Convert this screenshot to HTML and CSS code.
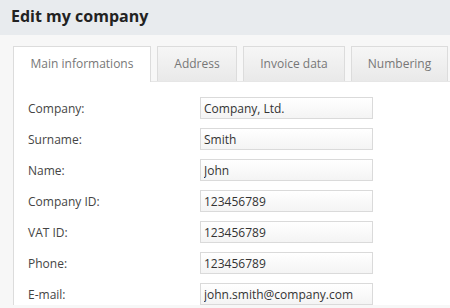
FILE: index.html
```html
<!DOCTYPE html>
<html>

<head>
    <title>Edit my company</title>
    <link rel="stylesheet" href="styles.css">
</head>

<body>
    <div class="pageHeader">
        <h1>Edit my company</h1>
    </div>
    <div class="pageBody">
        <div class="tabs">
            <div class="tab active">Main informations</div>
            <div class="tab">Address</div>
            <div class="tab">Invoice data</div>
            <div class="tab">Numbering</div>
        </div>
        <div class="tabPanel">
            <div class="formRow">
                <label>Company:</label>
                <input type="text" value="Company, Ltd." />
            </div>
            <div class="formRow">
                <label>Surname:</label>
                <input type="text" value="Smith" />
            </div>
            <div class="formRow">
                <label>Name:</label>
                <input type="text" value="John" />
            </div>
            <div class="formRow">
                <label>Company ID:</label>
                <input type="text" value="123456789" />
            </div>
            <div class="formRow">
                <label>VAT ID:</label>
                <input type="text" value="123456789" />
            </div>
            <div class="formRow">
                <label>Phone:</label>
                <input type="text" value="123456789" />
            </div>
            <div class="formRow">
                <label>E-mail:</label>
                <input type="text" value="john.smith@company.com" />
            </div>
        </div>
    </div>
</body>

</html>
```

FILE: styles.css
```css
body {
    margin: 0;
    font-family: "Open Sans", sans-serif;
    background-color: #f7f7f7;
    color: #444;
    overflow: hidden;
}
.pageHeader {
    height: 35px;
    background-color: #e8ebee;
    padding-left: 11px;
}
.pageHeader h1 {
    margin: 0;
    font-size: 16px;
    font-weight: bold;
    line-height: 33px;
    color: #222;
}
.pageBody {
    padding: 11px 0 0 13px;
}
.tabs {
    display: flex;
    gap: 6px;
}
.tab {
    height: 35px;
    line-height: 34px;
    font-size: 12px;
    color: #777;
    white-space: nowrap;
    background: linear-gradient(#f6f6f6, #e9e9e9);
    border: 1px solid #dcdcdc;
    border-bottom: none;
    text-align: center;
    box-sizing: border-box;
}
.tab:nth-child(1) { width: 138px; }
.tab:nth-child(2) { width: 80px; }
.tab:nth-child(3) { width: 102px; }
.tab:nth-child(4) { width: 97px; }
.tab.active {
    background: #fff;
    position: relative;
    height: 36px;
    margin-bottom: -1px;
    z-index: 1;
}
.tabPanel {
    background-color: #fff;
    border-left: 1px solid #dcdcdc;
    border-top: 1px solid #e6e6e6;
    padding: 15px 0 0 14px;
}
.formRow {
    display: flex;
    align-items: center;
    height: 22px;
    margin-bottom: 9px;
}
.formRow label {
    width: 172px;
    font-size: 12px;
    color: #444;
}
.formRow input {
    width: 173px;
    height: 22px;
    box-sizing: border-box;
    border: 1px solid #dadada;
    background: linear-gradient(#fff, #f4f4f4);
    padding: 0 3px;
    font-family: "Open Sans", sans-serif;
    font-size: 12px;
    color: #333;
    margin: 0;
}
```
